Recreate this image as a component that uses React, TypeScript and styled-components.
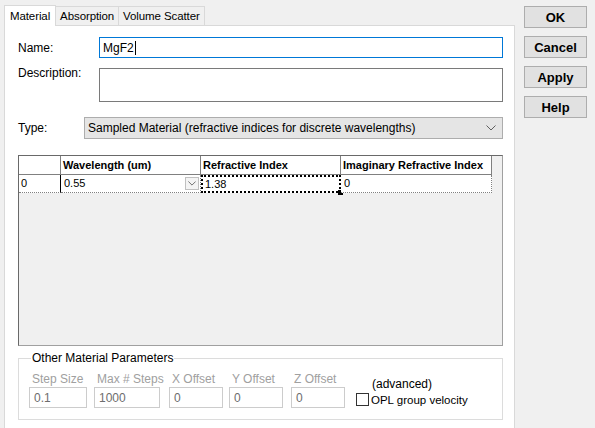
import styled, { createGlobalStyle } from 'styled-components'

const GlobalStyle = createGlobalStyle`
    html, body {
        margin: 0;
        padding: 0;
        background: #f0f0f0;
        font-family: "Liberation Sans", Arial, sans-serif;
        font-size: 12px;
        color: #000;
    }
    body {
        width: 595px;
        height: 428px;
        overflow: hidden;
    }
`

const Page = styled.div`
    display: flex;
    padding-left: 4px;
    height: 428px;
    box-sizing: border-box;
`

const TabControl = styled.div`
    width: 511px;
    display: flex;
    flex-direction: column;
`

const TabStrip = styled.div`
    display: flex;
    align-items: flex-end;
    height: 25px;
    padding-top: 5px;
    box-sizing: border-box;
`

const Tab = styled.div<{ $active?: boolean }>`
    height: ${({ $active }) => ($active ? '21px' : '19px')};
    padding: 0 ${({ $active }) => ($active ? '5px' : '4px')};
    box-sizing: border-box;
    display: flex;
    align-items: center;
    font-size: 11.5px;
    letter-spacing: -0.1px;
    border: 1px solid #d9d9d9;
    border-bottom: none;
    margin-left: ${({ $active }) => ($active ? '0' : '-1px')};
    background: ${({ $active }) => ($active ? '#fff' : '#f0f0f0')};
    position: relative;
    z-index: ${({ $active }) => ($active ? 1 : 0)};
    margin-bottom: ${({ $active }) => ($active ? '-1px' : '0')};
`

const Panel = styled.div`
    flex: 1;
    background: #fff;
    border: 1px solid #d9d9d9;
    border-bottom: none;
    padding: 11px 11px 0 13px;
    box-sizing: border-box;
`

const FieldRow = styled.div<{ $top?: number }>`
    display: flex;
    align-items: flex-start;
    margin-top: ${({ $top }) => $top ?? 0}px;
`

const Label = styled.div<{ $width: number; $offset?: number }>`
    width: ${({ $width }) => $width}px;
    flex-shrink: 0;
    margin-top: ${({ $offset }) => $offset ?? 0}px;
`

const TextInput = styled.div<{ $focus?: boolean; $height: number }>`
    flex: 1;
    height: ${({ $height }) => $height}px;
    box-sizing: border-box;
    border: 1px solid ${({ $focus }) => ($focus ? '#0078d7' : '#7a7a7a')};
    padding: 3px 3px;
    display: flex;
    align-items: flex-start;
`

const Caret = styled.span`
    display: inline-block;
    width: 1px;
    height: 14px;
    background: #000;
    margin-left: 1px;
`

const Select = styled.div`
    flex: 1;
    height: 22px;
    box-sizing: border-box;
    background: #e5e5e5;
    border: 1px solid #adadad;
    display: flex;
    align-items: center;
    justify-content: space-between;
    padding: 0 6px 0 3px;
`

const Grid = styled.div`
    margin-top: 16px;
    height: 191px;
    box-sizing: border-box;
    border: 1px solid #a0a0a0;
    border-top-color: #696969;
    border-left-color: #696969;
    background: #f0f0f0;
    font-family: Tahoma, "Liberation Sans", Arial, sans-serif;
    font-size: 11px;
`

const GridRow = styled.div`
    display: flex;
`

const HeadCell = styled.div<{ $width: number }>`
    width: ${({ $width }) => $width}px;
    height: 19px;
    box-sizing: border-box;
    background: #fff;
    border-right: 1px solid #808080;
    border-bottom: 1px solid #808080;
    font-weight: bold;
    padding: 3px 2px 0;
    white-space: nowrap;
`

const RowHead = styled.div`
    width: 42px;
    height: 18px;
    box-sizing: border-box;
    background: #fff;
    border-right: 1px solid #000;
    border-bottom: 1px dotted #808080;
    padding: 2px 2px 0;
`

const Cell = styled.div<{ $width: number; $focus?: boolean }>`
    width: ${({ $width }) => $width}px;
    height: 18px;
    box-sizing: border-box;
    background: #fff;
    border-right: 1px dotted #808080;
    border-bottom: 1px dotted #808080;
    padding: 2px 3px 0;
    position: relative;
    ${({ $focus }) =>
        $focus &&
        `
        border: 2px dotted #000;
        padding: 1px 2px 0;
    `}
`

const Handle = styled.span`
    position: absolute;
    right: -4px;
    bottom: -4px;
    width: 5px;
    height: 5px;
    background: #000;
`

const DropButton = styled.span`
    position: absolute;
    right: 1px;
    top: 2px;
    width: 14px;
    height: 13px;
    box-sizing: border-box;
    border: 1px solid #c0c0c0;
    background: #f4f4f4;
    display: flex;
    align-items: center;
    justify-content: center;
`

const Group = styled.fieldset`
    margin: 5px 0 0;
    border: 1px solid #dcdcdc;
    padding: 0 10px 11px;
    height: 69px;
    box-sizing: border-box;
    display: flex;
    align-items: flex-end;
    legend {
        padding: 0 1px;
        margin-left: 2px;
    }
`

const Param = styled.div<{ $width: number; $gap: number }>`
    width: ${({ $width }) => $width}px;
    margin-right: ${({ $gap }) => $gap}px;
    display: flex;
    flex-direction: column;
`

const ParamLabel = styled.div`
    color: #a0a0a0;
    padding-left: 3px;
    margin-bottom: 1px;
    white-space: nowrap;
`

const ParamInput = styled.div`
    height: 21px;
    box-sizing: border-box;
    border: 1px solid #cccccc;
    color: #6d6d6d;
    padding: 3px 4px;
`

const Advanced = styled.div`
    margin-left: 11px;
    display: flex;
    flex-direction: column;
    padding-bottom: 2px;
`

const AdvancedNote = styled.div`
    margin-left: 16px;
    margin-bottom: 2px;
`

const CheckRow = styled.div`
    display: flex;
    align-items: center;
    gap: 2px;
    white-space: nowrap;
    font-size: 11.5px;
`

const CheckBox = styled.span`
    width: 13px;
    height: 13px;
    box-sizing: border-box;
    border: 1px solid #333;
    background: #fff;
`

const ButtonColumn = styled.div`
    margin-left: 9px;
    padding-top: 6px;
    display: flex;
    flex-direction: column;
    gap: 8px;
`

const Button = styled.div`
    width: 63px;
    height: 22px;
    box-sizing: border-box;
    background: #e1e1e1;
    border: 1px solid #adadad;
    font-weight: bold;
    font-size: 13px;
    display: flex;
    align-items: center;
    justify-content: center;
`

function Chevron({ size = 10, color = '#606060' }: { size?: number; color?: string }) {
    return (
        <svg width={size} height={size / 2 + 1} viewBox="0 0 10 6">
            <path d="M0.5 0.5 L5 5 L9.5 0.5" fill="none" stroke={color} strokeWidth="1" />
        </svg>
    )
}

const params = [
    { label: 'Step Size', value: '0.1', width: 58, gap: 7 },
    { label: 'Max # Steps', value: '1000', width: 66, gap: 9 },
    { label: 'X Offset', value: '0', width: 54, gap: 6 },
    { label: 'Y Offset', value: '0', width: 54, gap: 8 },
    { label: 'Z Offset', value: '0', width: 54, gap: 0 },
]

export default function App() {
    return (
        <>
            <GlobalStyle />
            <Page>
                <TabControl>
                    <TabStrip>
                        <Tab $active>Material</Tab>
                        <Tab>Absorption</Tab>
                        <Tab>Volume Scatter</Tab>
                    </TabStrip>
                    <Panel>
                        <FieldRow>
                            <Label $width={81} $offset={4}>Name:</Label>
                            <TextInput $focus $height={21}>
                                MgF2<Caret />
                            </TextInput>
                        </FieldRow>
                        <FieldRow $top={10}>
                            <Label $width={81} $offset={-2}>Description:</Label>
                            <TextInput $height={34} />
                        </FieldRow>
                        <FieldRow $top={15}>
                            <Label $width={66} $offset={4}>Type:</Label>
                            <Select>
                                <span>Sampled Material (refractive indices for discrete wavelengths)</span>
                                <Chevron />
                            </Select>
                        </FieldRow>
                        <Grid>
                            <GridRow>
                                <HeadCell $width={42} />
                                <HeadCell $width={140}>Wavelength (um)</HeadCell>
                                <HeadCell $width={140}>Refractive Index</HeadCell>
                                <HeadCell $width={151}>Imaginary Refractive Index</HeadCell>
                            </GridRow>
                            <GridRow>
                                <RowHead>0</RowHead>
                                <Cell $width={140}>
                                    0.55
                                    <DropButton>
                                        <Chevron size={8} color="#505050" />
                                    </DropButton>
                                </Cell>
                                <Cell $width={140} $focus>
                                    1.38
                                    <Handle />
                                </Cell>
                                <Cell $width={151}>0</Cell>
                            </GridRow>
                        </Grid>
                        <Group>
                            <legend>Other Material Parameters</legend>
                            {params.map((p) => (
                                <Param key={p.label} $width={p.width} $gap={p.gap}>
                                    <ParamLabel>{p.label}</ParamLabel>
                                    <ParamInput>{p.value}</ParamInput>
                                </Param>
                            ))}
                            <Advanced>
                                <AdvancedNote>(advanced)</AdvancedNote>
                                <CheckRow>
                                    <CheckBox />
                                    <span>OPL group velocity</span>
                                </CheckRow>
                            </Advanced>
                        </Group>
                    </Panel>
                </TabControl>
                <ButtonColumn>
                    <Button>OK</Button>
                    <Button>Cancel</Button>
                    <Button>Apply</Button>
                    <Button>Help</Button>
                </ButtonColumn>
            </Page>
        </>
    )
}
